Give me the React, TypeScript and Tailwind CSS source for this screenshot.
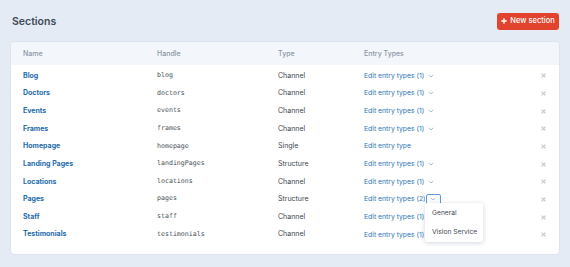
import React from "react";

type Section = { name: string; handle: string; type: string; entry: string; caret: boolean };

const sections: Section[] = [
  { name: "Blog", handle: "blog", type: "Channel", entry: "Edit entry types (1)", caret: true },
  { name: "Doctors", handle: "doctors", type: "Channel", entry: "Edit entry types (1)", caret: true },
  { name: "Events", handle: "events", type: "Channel", entry: "Edit entry types (1)", caret: true },
  { name: "Frames", handle: "frames", type: "Channel", entry: "Edit entry types (1)", caret: true },
  { name: "Homepage", handle: "homepage", type: "Single", entry: "Edit entry type", caret: false },
  { name: "Landing Pages", handle: "landingPages", type: "Structure", entry: "Edit entry types (1)", caret: true },
  { name: "Locations", handle: "locations", type: "Channel", entry: "Edit entry types (1)", caret: true },
  { name: "Pages", handle: "pages", type: "Structure", entry: "Edit entry types (2)", caret: true },
  { name: "Staff", handle: "staff", type: "Channel", entry: "Edit entry types (1)", caret: true },
  { name: "Testimonials", handle: "testimonials", type: "Channel", entry: "Edit entry types (1)", caret: true },
];

function Chevron() {
  return (
    <svg width="6" height="4" viewBox="0 0 6 4" fill="none" className="text-[#8fb0d0]">
      <path d="M0.7 0.8 L3 3 L5.3 0.8" stroke="currentColor" strokeWidth="0.8" />
    </svg>
  );
}

function Cross() {
  return (
    <svg width="5" height="5" viewBox="0 0 5 5" className="text-[#c4cad1]">
      <path d="M0.6 0.6 L4.4 4.4 M4.4 0.6 L0.6 4.4" stroke="currentColor" strokeWidth="1.3" />
    </svg>
  );
}

function Plus() {
  return (
    <svg width="6" height="6" viewBox="0 0 6 6">
      <path d="M3 0.3 V5.7 M0.3 3 H5.7" stroke="white" strokeWidth="1.4" />
    </svg>
  );
}

export default function App() {
  return (
    <div
      className="w-[570px] h-[267px] bg-[#e4ebf5] px-[11px] overflow-hidden"
      style={{ fontFamily: "Inter, 'Noto Sans', sans-serif" }}
    >
      <div className="flex items-center justify-between h-[42px] pt-[1px]">
        <h1 className="text-[10.5px] font-semibold text-[#3f4a55] pl-[1px]">Sections</h1>
        <button className="h-[17px] w-[62px] rounded-[3px] bg-[#e2432d] text-white text-[7.5px] font-medium flex items-center justify-center gap-[3px] mb-[1px]">
          <Plus />
          New section
        </button>
      </div>

      <div className="relative bg-white rounded-[4px] shadow-[0_0_0_1px_rgba(205,216,228,0.35)] h-[212px]">
        <div className="grid grid-cols-[134px_121px_86px_177px_1fr] items-center h-[23px] bg-[#f3f7fc] rounded-t-[4px] pl-[12px] pt-[1px] text-[7px] font-medium text-[#8b96a2]">
          <div>Name</div>
          <div>Handle</div>
          <div>Type</div>
          <div>Entry Types</div>
          <div></div>
        </div>
        <div className="pt-[2px]">
          {sections.map((s) => (
            <div
              key={s.handle}
              className="grid grid-cols-[134px_121px_86px_177px_1fr] items-center h-[17.67px] pl-[12px] text-[7px]"
            >
              <div className="font-bold text-[#1f6bab]">{s.name}</div>
              <div
                className="text-[6.6px] text-[#464f59]"
                style={{ fontFamily: "'DejaVu Sans Mono', 'Liberation Mono', monospace" }}
              >
                {s.handle}
              </div>
              <div className="text-[#3d454e]">{s.type}</div>
              <div className="flex items-center gap-[4px] text-[6.8px] text-[#2b73b4]">
                <span>{s.entry}</span>
                {s.caret &&
                  (s.handle === "pages" ? (
                    <span className="flex items-center justify-center w-[15px] h-[10.5px] -ml-[4px] border border-[#5a9be0] rounded-[2px] bg-white">
                      <Chevron />
                    </span>
                  ) : (
                    <Chevron />
                  ))}
              </div>
              <div className="flex justify-start">
                <Cross />
              </div>
            </div>
          ))}
        </div>

        <div className="absolute left-[414px] top-[161px] w-[58px] h-[39px] bg-white rounded-[3px] shadow-[0_1px_5px_rgba(40,60,90,0.22)] flex flex-col justify-center gap-[9px] pl-[7px] text-[6.7px] text-[#3f4a55]">
          <div>General</div>
          <div>Vision Service</div>
        </div>
      </div>
    </div>
  );
}
